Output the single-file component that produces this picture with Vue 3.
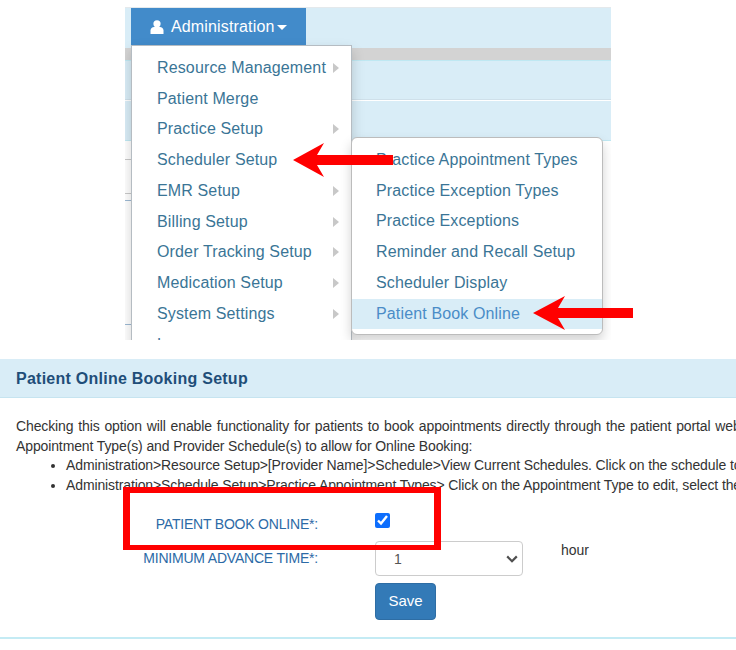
<script setup>
const menu = [
  { t: 'Resource Management', a: true },
  { t: 'Patient Merge', a: false },
  { t: 'Practice Setup', a: true },
  { t: 'Scheduler Setup', a: false },
  { t: 'EMR Setup', a: true },
  { t: 'Billing Setup', a: true },
  { t: 'Order Tracking Setup', a: true },
  { t: 'Medication Setup', a: true },
  { t: 'System Settings', a: true },
  { t: 'Language', a: true }
]
const sub = [
  'Practice Appointment Types',
  'Practice Exception Types',
  'Practice Exceptions',
  'Reminder and Recall Setup',
  'Scheduler Display',
  'Patient Book Online'
]
</script>

<template>
  <div class="page">
    <section class="shot">
      <div class="strip top"></div>
      <div class="strip gray"></div>
      <div class="strip band"></div>
      <div class="strip band second"></div>
      <i class="rule" style="top: 152px"></i>
      <i class="rule" style="top: 186px"></i>
      <i class="rule blue" style="top: 193px"></i>
      <i class="rule blue" style="top: 317px"></i>

      <button class="admin">
        <svg class="user" viewBox="0 0 14 14" width="14" height="14">
          <circle cx="7" cy="3.8" r="3.6" fill="#fff" />
          <path d="M0.5 14V10.6C0.5 8.4 2.4 7 4 7H10C11.6 7 13.5 8.4 13.5 10.6V14Z" fill="#fff" />
        </svg>
        <span>Administration</span>
        <i class="caret"></i>
      </button>

      <ul class="menu">
        <li v-for="m in menu" :key="m.t">
          {{ m.t }}<i v-if="m.a" class="tri"></i>
        </li>
      </ul>

      <ul class="submenu">
        <li v-for="(s, i) in sub" :key="s" :class="{ active: i === 5 }">{{ s }}</li>
      </ul>
    </section>

    <section class="panel">
      <h2>Patient Online Booking Setup</h2>
      <div class="body">
        <p class="just">Checking this option will enable functionality for patients to book appointments directly through the patient portal website.</p>
        <p>Appointment Type(s) and Provider Schedule(s) to allow for Online Booking:</p>
        <ul class="bullets">
          <li>Administration&gt;Resource Setup&gt;[Provider Name]&gt;Schedule&gt;View Current Schedules. Click on the schedule to edit</li>
          <li>Administration&gt;Schedule Setup&gt;Practice Appointment Types&gt; Click on the Appointment Type to edit, select the</li>
        </ul>
        <form class="form" @submit.prevent>
          <label class="lab one">PATIENT BOOK ONLINE*:</label>
          <input class="check" type="checkbox" checked />
          <span></span>
          <label class="lab two">MINIMUM ADVANCE TIME*:</label>
          <div class="selwrap">
            <select>
              <option>1</option>
            </select>
            <svg class="chev" viewBox="0 0 12 8" width="12" height="8">
              <path d="M1.2 1.4L6 6.2L10.8 1.4" fill="none" stroke="#4f4f4f" stroke-width="2.2" />
            </svg>
          </div>
          <span class="hour">hour</span>
          <span></span>
          <button class="save">Save</button>
        </form>
      </div>
    </section>

    <svg class="arrow a1" viewBox="0 0 100 34" width="100" height="34">
      <polygon points="0,17 31,0 24,12 100,12 100,22 24,22 31,34" fill="#f00" />
    </svg>
    <svg class="arrow a2" viewBox="0 0 100 34" width="100" height="34">
      <polygon points="0,17 32,0 25,12 100,12 100,22 25,22 32,34" fill="#f00" />
    </svg>
    <div class="redbox"></div>
  </div>
</template>

<style>
html, body { margin: 0; background: #fff; overflow: hidden; }
</style>

<style scoped>
.page {
  position: relative;
  width: 736px;
  height: 650px;
  overflow: hidden;
  padding-top: 7px;
  box-sizing: border-box;
  font-family: "Liberation Sans", Arial, sans-serif;
  color: #333;
}
.shot {
  position: relative;
  margin-left: 125px;
  width: 486px;
  height: 333px;
  overflow: hidden;
}
.strip { background: #d9edf7; }
.top { height: 41px; border-top: 1px solid #e4e9ec; box-sizing: border-box; }
.gray { height: 12px; background: #d3d3d3; }
.band { height: 40px; border-top: 1px solid #bfe8f2; border-bottom: 1px solid #cfe0ea; box-sizing: border-box; }
.second { margin-top: 1px; height: 40px; border-bottom: 1px solid #bfe8f2; border-top: 0; }
.rule { position: absolute; left: 0; width: 7px; height: 1px; background: #c9c9c9; }
.rule.blue { background: #9db9d3; }
.admin {
  position: absolute;
  left: 6px;
  top: 1px;
  width: 175px;
  height: 37px;
  display: flex;
  align-items: center;
  padding: 0 0 0 19px;
  border: 0;
  background: #428bca;
  color: #fff;
  font: 16px "Liberation Sans", Arial, sans-serif;
  letter-spacing: .15px;
  box-sizing: border-box;
}
.user { margin-right: 7px; }
.caret {
  margin-left: 3px;
  margin-top: 2px;
  border-left: 5px solid transparent;
  border-right: 5px solid transparent;
  border-top: 5px solid #fff;
}
.menu, .submenu {
  position: absolute;
  margin: 0;
  list-style: none;
  background: #fff;
  box-sizing: border-box;
  font-size: 16px;
  letter-spacing: .14px;
  color: #3a7596;
  box-shadow: 0 6px 12px rgba(0, 0, 0, .175);
}
.menu {
  left: 6px;
  top: 38px;
  width: 221px;
  height: 310px;
  padding: 6.8px 0 0;
  border: 1px solid #b5bcc2;
  z-index: 1;
}
.menu li {
  position: relative;
  height: 30.75px;
  line-height: 30.75px;
  padding-left: 25px;
  white-space: nowrap;
}
.tri {
  position: absolute;
  left: 201px;
  top: 10px;
  border-top: 5.5px solid transparent;
  border-bottom: 5.5px solid transparent;
  border-left: 6px solid #c8c8c8;
}
.submenu {
  left: 226px;
  top: 130px;
  width: 252px;
  height: 198px;
  padding: 6.8px 0 0;
  border: 1px solid #bcbcbc;
  border-radius: 6px;
  z-index: 2;
}
.submenu li {
  height: 30.75px;
  line-height: 30.75px;
  padding-left: 24px;
  white-space: nowrap;
}
.submenu li.active {
  background: #d9edf7;
  color: #4a8cc7;
}
.panel { margin-top: 19px; height: 280px; border-bottom: 2px solid #c4ebf4; box-sizing: border-box; }
.panel h2 {
  margin: 0;
  height: 39px;
  padding-left: 16px;
  line-height: 39px;
  font-size: 16px;
  letter-spacing: .25px;
  font-weight: 700;
  color: #1f4e79;
  background: #d9edf7;
  border-bottom: 1px solid #c6e4f0;
  box-sizing: border-box;
  white-space: nowrap;
}
.body { padding: 18px 0 0 16px; font-size: 14px; line-height: 20px; letter-spacing: -.12px; }
.body p { margin: 0; white-space: nowrap; }
.just { word-spacing: 1.1px; }
.bullets { margin: 0; padding: 0 0 0 50px; white-space: nowrap; line-height: 19.5px; }
.form {
  display: grid;
  grid-template-columns: 302px 148px auto;
  grid-template-rows: 37px 34px 37px;
  column-gap: 0;
  margin-top: 17px;
}
.lab {
  text-align: right;
  font-size: 14px;
  letter-spacing: -.2px;
  color: #2c6aa6;
  white-space: nowrap;
}
.lab.one { padding-top: 2px; }
.lab.two { margin-top: -1px; }
.check {
  width: 15px;
  height: 15px;
  margin: 1px 0 0 57px;
  accent-color: #0d6efd;
}
.selwrap {
  position: relative;
  margin-left: 57px;
  width: 148px;
  height: 35px;
  margin-top: -8px;
}
select {
  appearance: none;
  width: 148px;
  height: 35px;
  padding: 0 0 0 18px;
  border: 1px solid #ccc;
  border-radius: 4px;
  background: #fff;
  font: 14px "Liberation Sans", Arial, sans-serif;
  color: #555;
}
.chev { position: absolute; right: 5px; top: 14px; pointer-events: none; }
.hour { margin-left: 95px; margin-top: -9px; font-size: 14px; letter-spacing: 0; white-space: nowrap; }
.save {
  grid-column: 2;
  margin: 0 0 0 57px;
  width: 61px;
  height: 37px;
  padding: 0 0 2px;
  background: #337ab7;
  color: #fff;
  border: 1px solid #2e6da4;
  border-radius: 4px;
  font: 15px "Liberation Sans", Arial, sans-serif;
}
.arrow { position: absolute; }
.a1 { left: 293px; top: 143px; z-index: 5; }
.a2 { left: 533px; top: 296px; z-index: 5; }
.redbox {
  position: absolute;
  left: 123px;
  top: 487px;
  width: 318px;
  height: 63px;
  border: solid #f00;
  border-width: 6px 7px 5px;
  box-sizing: border-box;
  z-index: 5;
}
</style>
